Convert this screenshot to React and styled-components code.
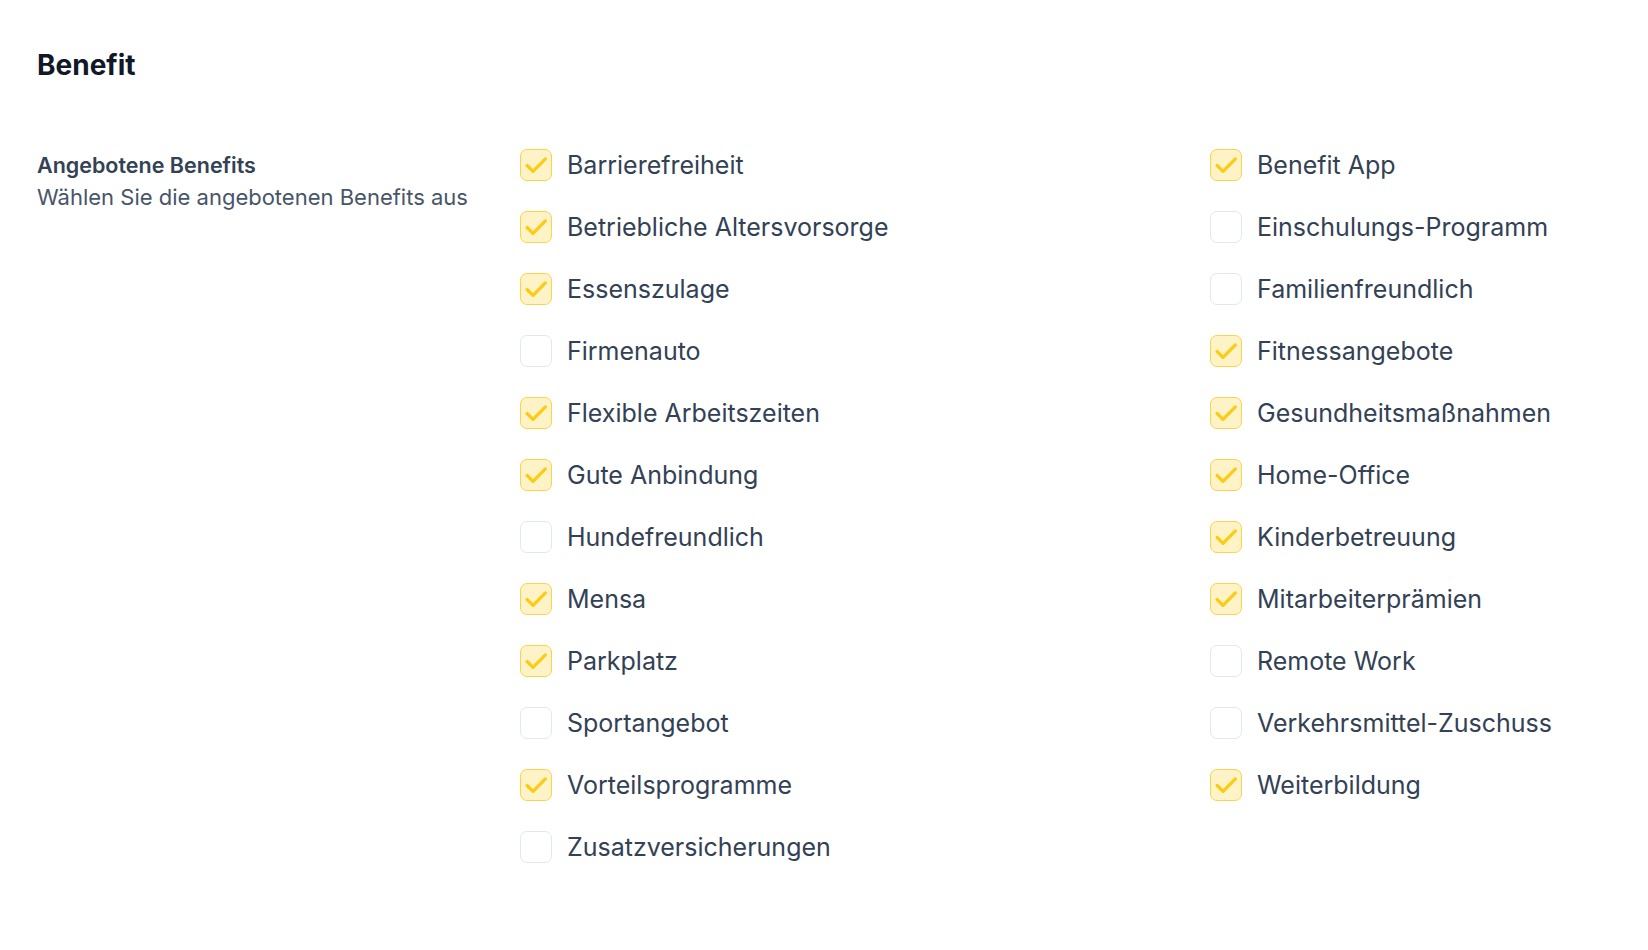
import React, { useState } from "react";
import styled, { createGlobalStyle } from "styled-components";

const GlobalStyle = createGlobalStyle`
  body {
    margin: 0;
    background: #ffffff;
    font-family: Inter, "Noto Sans", "Liberation Sans", sans-serif;
  }
`;

const Page = styled.div`
  padding: 48px 37px 40px;
`;

const Title = styled.h1`
  margin: 0 0 67px;
  font-size: 28px;
  line-height: 34px;
  font-weight: 700;
  color: #111827;
`;

const Section = styled.div`
  display: grid;
  grid-template-columns: 483px 1fr;
`;

const LabelBox = styled.div`
  display: flex;
  flex-direction: column;
`;

const LabelTitle = styled.div`
  font-size: 21.5px;
  line-height: 32px;
  font-weight: 600;
  color: #334155;
`;

const LabelHint = styled.div`
  font-size: 22px;
  line-height: 32px;
  color: #475569;
`;

const Options = styled.div`
  display: grid;
  grid-template-columns: 690px 1fr;
  row-gap: 30px;
`;

const Option = styled.label`
  display: flex;
  align-items: center;
  gap: 15px;
  height: 32px;
  cursor: pointer;
  font-size: 25px;
  color: #334155;
`;

const Box = styled.span`
  box-sizing: border-box;
  width: 32px;
  height: 32px;
  flex-shrink: 0;
  border-radius: 7px;
  border: 1.5px solid ${(p) => (p.$checked ? "#fcd34d" : "#e2e8f0")};
  background: ${(p) => (p.$checked ? "#fef3c7" : "#ffffff")};
  display: flex;
  align-items: center;
  justify-content: center;
`;

const benefits = [
  ["Barrierefreiheit", true],
  ["Benefit App", true],
  ["Betriebliche Altersvorsorge", true],
  ["Einschulungs-Programm", false],
  ["Essenszulage", true],
  ["Familienfreundlich", false],
  ["Firmenauto", false],
  ["Fitnessangebote", true],
  ["Flexible Arbeitszeiten", true],
  ["Gesundheitsmaßnahmen", true],
  ["Gute Anbindung", true],
  ["Home-Office", true],
  ["Hundefreundlich", false],
  ["Kinderbetreuung", true],
  ["Mensa", true],
  ["Mitarbeiterprämien", true],
  ["Parkplatz", true],
  ["Remote Work", false],
  ["Sportangebot", false],
  ["Verkehrsmittel-Zuschuss", false],
  ["Vorteilsprogramme", true],
  ["Weiterbildung", true],
  ["Zusatzversicherungen", false],
];

const Check = () => (
  <svg width="32" height="32" viewBox="0 0 32 32" fill="none">
    <path
      d="M6.5 16.5l6.3 6.3L26 9.5"
      stroke="#facc15"
      strokeWidth="3.5"
      strokeLinecap="round"
      strokeLinejoin="round"
    />
  </svg>
);

const App = () => {
  const [selected, setSelected] = useState(
    Object.fromEntries(benefits.map(([name, on]) => [name, on]))
  );

  const toggle = (name) => setSelected((s) => ({ ...s, [name]: !s[name] }));

  return (
    <Page>
      <GlobalStyle />
      <Title>Benefit</Title>
      <Section>
        <LabelBox>
          <LabelTitle>Angebotene Benefits</LabelTitle>
          <LabelHint>Wählen Sie die angebotenen Benefits aus</LabelHint>
        </LabelBox>
        <Options>
          {benefits.map(([name]) => (
            <Option key={name} onClick={() => toggle(name)}>
              <Box $checked={selected[name]}>{selected[name] && <Check />}</Box>
              {name}
            </Option>
          ))}
        </Options>
      </Section>
    </Page>
  );
};

export default App;
